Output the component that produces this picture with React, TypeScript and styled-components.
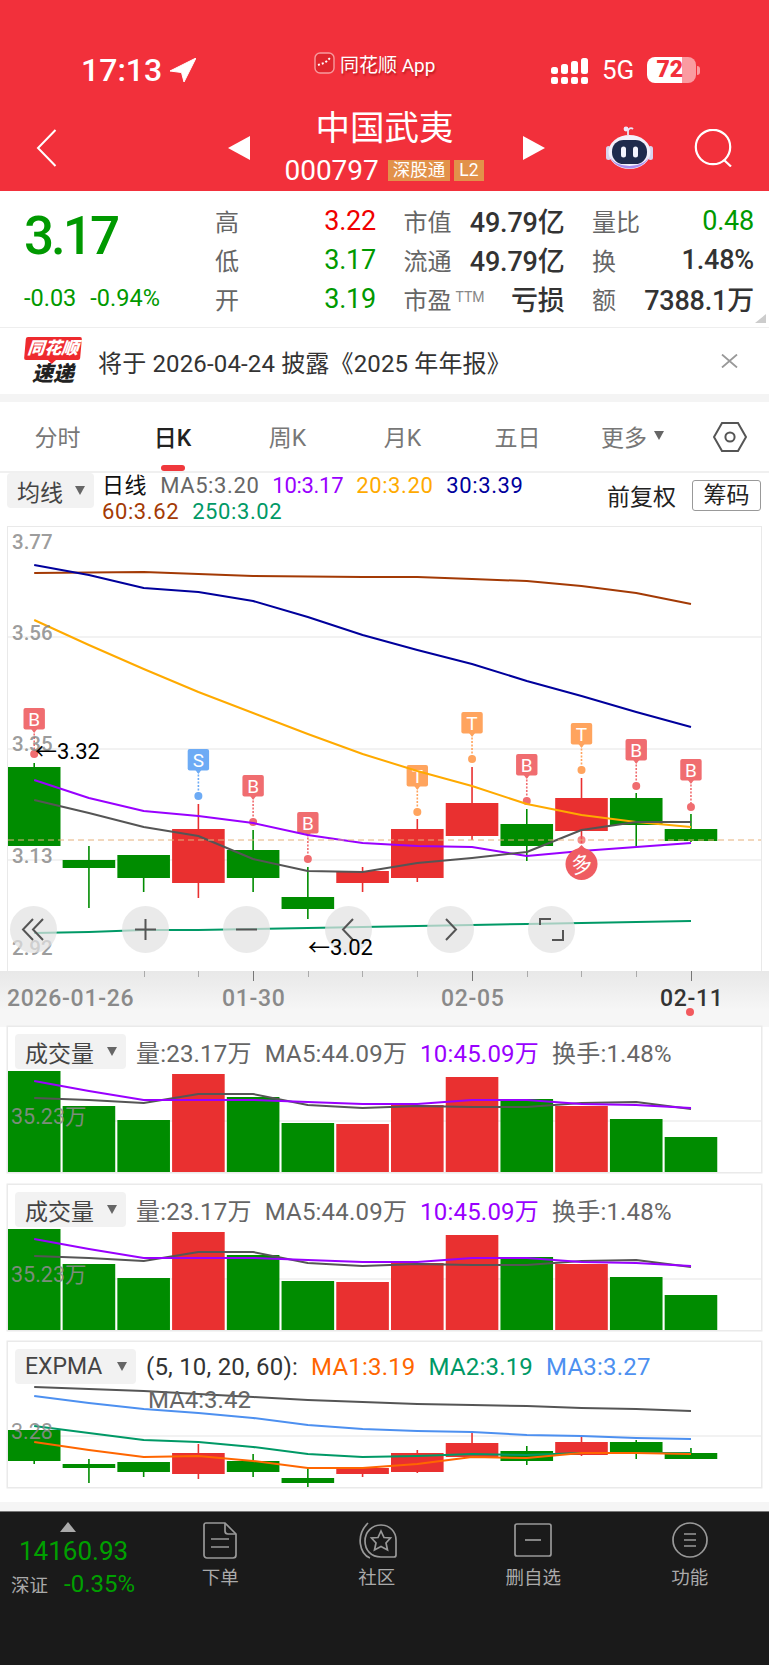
import React from "react";
import styled, { createGlobalStyle } from "styled-components";

const FONT = `Roboto, "Noto Sans CJK SC", sans-serif`;
const RED = "#e93030";
const GREEN = "#008c00";
const HEAD = "#f2303b";

const GlobalStyle = createGlobalStyle`
    html, body { margin: 0; padding: 0; background: #fff; }
    * { box-sizing: border-box; }
    body { font-family: ${FONT}; color: #333; }
`;

// candle x centres, shared by every chart
const XS = Array.from({ length: 13 }, (_, i) => 34.2 + 54.73 * i);
const BODY_W = 52.6;

type Candle = { up: boolean; top: number; bottom: number; high: number; low: number };
const c = (up: boolean, top: number, bottom: number, high: number, low: number): Candle => ({ up, top, bottom, high, low });

const MAIN_CANDLES: Candle[] = [
    c(false, 767, 846, 763, 846),
    c(false, 860, 868, 846, 908),
    c(false, 855, 878, 855, 892),
    c(true, 829, 883, 804, 898),
    c(false, 850, 878, 830, 892),
    c(false, 897, 909, 867, 919),
    c(true, 871, 883, 867, 892),
    c(true, 829, 878, 819, 882),
    c(true, 803, 836, 767, 840),
    c(false, 824, 846, 809, 861),
    c(true, 798, 831, 778, 843),
    c(false, 798, 825, 793, 846),
    c(false, 829, 841, 814, 842),
];

const EXPMA_CANDLES: Candle[] = [
    c(false, 1430, 1461, 1430, 1464),
    c(false, 1464, 1468, 1459, 1483),
    c(false, 1462, 1472, 1462, 1477),
    c(true, 1453, 1474, 1444, 1479),
    c(false, 1461, 1472, 1454, 1477),
    c(false, 1478, 1483, 1468, 1487),
    c(true, 1468, 1474, 1467, 1477),
    c(true, 1453, 1472, 1450, 1473),
    c(true, 1443, 1457, 1431, 1458),
    c(false, 1451, 1461, 1446, 1465),
    c(true, 1442, 1455, 1435, 1456),
    c(false, 1442, 1453, 1440, 1459),
    c(false, 1453, 1459, 1448, 1459),
];

const MA60 = [573, 572.5, 572, 574, 576, 576.5, 577, 577, 579, 581, 586, 593, 604];
const MA30 = [565, 575, 588, 592, 601, 617, 635, 650, 664, 681, 696, 712, 727];
const MA20 = [620, 645, 669, 692, 713, 734, 754, 771, 786, 804, 815, 822, 827];
const MA10 = [780, 798, 811, 816, 823, 835, 843, 846, 847, 856, 851, 847, 843];
const MA5 = [800, 813, 827, 836, 859, 871, 872, 863, 858, 852, 830, 822, 822];
const MA250 = [933, 932, 930, 930, 929, 928, 927, 926, 925, 924, 923, 922, 921];

const VOL_TOPS = [1071, 1106, 1120, 1074, 1097, 1123, 1124, 1105, 1077, 1099, 1106, 1119, 1137];
const VOL_UP = [false, false, false, true, false, false, true, true, true, false, true, false, false];
const VOL_PURPLE = [1081, 1091, 1100, 1100, 1100, 1102, 1104, 1104, 1100, 1100, 1104, 1105, 1108];
const VOL_GRAY = [1098, 1100, 1103, 1094, 1094, 1105, 1108, 1106, 1107, 1107, 1103, 1102, 1109];

const EX_GRAY = [1387, 1389, 1391, 1394, 1397, 1400, 1402, 1404, 1405, 1406, 1408, 1409, 1411];
const EX_BLUE = [1396, 1403, 1409, 1413, 1418, 1425, 1429, 1431, 1432, 1435, 1436, 1438, 1439];
const EX_GREEN = [1426, 1433, 1440, 1442, 1447, 1454, 1457, 1456, 1454, 1455, 1453, 1453, 1453];
const EX_ORANGE = [1442, 1450, 1457, 1456, 1461, 1468, 1468, 1464, 1457, 1458, 1453, 1453, 1454];

const SIGNALS = [
    { i: 0, kind: "B", top: 708, dot: 754 },
    { i: 3, kind: "S", top: 749, dot: 796 },
    { i: 4, kind: "B", top: 775, dot: 822 },
    { i: 5, kind: "B", top: 812, dot: 859 },
    { i: 7, kind: "T", top: 765, dot: 812 },
    { i: 8, kind: "T", top: 712, dot: 759 },
    { i: 9, kind: "B", top: 754, dot: 801 },
    { i: 10, kind: "T", top: 723, dot: 770 },
    { i: 11, kind: "B", top: 739, dot: 786 },
    { i: 12, kind: "B", top: 759, dot: 807 },
];
const SIGNAL_COLOR: Record<string, string> = { B: "#f06d70", S: "#6dabf5", T: "#ffa45e" };

const path = (ys: number[]) => ys.map((y, i) => `${XS[i].toFixed(1)},${y}`).join(" ");

const Page = styled.div`
    width: 769px;
    height: 1665px;
    display: flex;
    flex-direction: column;
    overflow: hidden;
    background: #fff;
    font-family: ${FONT};
`;

/* ---------- red header ---------- */
const Header = styled.header`
    height: 191px;
    background: ${HEAD};
    color: #fff;
`;
const StatusBar = styled.div`
    height: 100px;
    padding-top: 40px;
    display: grid;
    grid-template-columns: 314px 237px 218px;
    align-items: center;
`;
const TimeBlock = styled.div`
    display: flex;
    align-items: center;
    gap: 8px;
    padding-left: 81px;
    height: 34px;
`;
const Time = styled.span`
    font-size: 32px;
    font-weight: 500;
    line-height: 34px;
`;
const Banner = styled.div`
    display: flex;
    align-items: center;
    gap: 5px;
    margin-bottom: 14px;
    font-size: 19px;
    text-shadow: 1px 2px 2px rgba(120, 0, 0, 0.45);
`;
const StatusRight = styled.div`
    display: flex;
    align-items: center;
`;
const SignalGrid = styled.div`
    display: flex;
    gap: 3px;
`;
const SignalCol = styled.div`
    display: flex;
    flex-direction: column;
    justify-content: flex-end;
    gap: 3px;
    height: 27px;
`;
const SignalTop = styled.span<{ $h: number }>`
    width: 7px;
    height: ${({ $h }) => $h}px;
    border-radius: 2.5px;
    background: #fff;
`;
const SignalDot = styled.span`
    width: 7px;
    height: 7px;
    border-radius: 2px;
    background: #fff;
`;
const NetLabel = styled.span`
    margin-left: 14px;
    font-size: 26px;
    line-height: 27px;
`;
const Battery = styled.div`
    position: relative;
    margin-left: 13px;
    width: 49px;
    height: 26px;
    border-radius: 8px;
    overflow: hidden;
    background: linear-gradient(to right, #fff 0 35px, #fa9ba1 35px 49px);
    color: ${HEAD};
    font-size: 23px;
    font-weight: 900;
    line-height: 26px;
    text-align: center;
    padding-right: 4px;
`;
const BatteryNub = styled.span`
    width: 3px;
    height: 9px;
    margin-left: 1px;
    border-radius: 0 3px 3px 0;
    background: #fa9ba1;
`;
const NavBar = styled.div`
    height: 91px;
    padding-top: 4px;
    display: grid;
    grid-template-columns: 228px 22px 273px 22px 1fr;
    align-items: center;
`;
const BackCell = styled.div`
    padding-left: 36px;
    display: flex;
`;
const TitleBlock = styled.div`
    display: flex;
    flex-direction: column;
    align-items: center;
`;
const Title = styled.div`
    font-size: 34.5px;
    line-height: 46px;
    margin-right: 4px;
`;
const SubLine = styled.div`
    display: flex;
    align-items: center;
    height: 40px;
    margin-right: 1px;
`;
const Code = styled.span`
    font-size: 28px;
    margin-right: 9px;
`;
const Badge = styled.span`
    height: 21px;
    padding: 0 5px;
    margin-right: 4px;
    background: #e2914a;
    color: #fff;
    font-size: 17.5px;
    line-height: 21px;
`;
const NavActions = styled.div`
    display: flex;
    align-items: center;
    gap: 41px;
    margin-left: 61px;
`;

/* ---------- quote ---------- */
const Quote = styled.section`
    position: relative;
    height: 137px;
    padding-top: 10px;
    display: grid;
    grid-template-columns: 215px 1fr;
    border-bottom: 1px solid #eee;
`;
const PriceCol = styled.div`
    padding-left: 24px;
    display: flex;
    flex-direction: column;
    color: #009900;
`;
const BigPrice = styled.div`
    height: 78px;
    padding-top: 5px;
    font-size: 53px;
    line-height: 60px;
    font-weight: 500;
    letter-spacing: -3px;
`;
const ChangeRow = styled.div`
    display: flex;
    gap: 14px;
    font-size: 23.5px;
    line-height: 39px;
`;
const StatGrid = styled.div`
    display: grid;
    grid-template-columns: 161px 161px 162px;
    grid-auto-rows: 39px;
    column-gap: 27.5px;
`;
const Stat = styled.div`
    display: flex;
    align-items: center;
    justify-content: space-between;
`;
const StatLabel = styled.span`
    font-size: 24px;
    color: #666;
`;
const Tiny = styled.sup`
    font-size: 14px;
    margin-left: 4px;
    color: #888;
    vertical-align: 7px;
    line-height: 0;
`;
const StatValue = styled.span<{ $color: string }>`
    font-size: 27px;
    letter-spacing: -0.2px;
    font-weight: ${({ $color }) => ($color === "#333" ? 500 : 400)};
    color: ${({ $color }) => $color};
`;
const CornerMark = styled.span`
    position: absolute;
    right: 3px;
    bottom: 4px;
    width: 0;
    height: 0;
    border-left: 11px solid transparent;
    border-bottom: 9px solid #ccc;
`;

/* ---------- notice ---------- */
const Notice = styled.section`
    height: 66px;
    display: flex;
    align-items: center;
    padding: 0 31px 0 25px;
`;
const LogoMark = styled.div`
    width: 56px;
    display: flex;
    flex-direction: column;
    align-items: center;
`;
const LogoTag = styled.div`
    position: relative;
    width: 56px;
    height: 23px;
    border-radius: 2px;
    background: #ee2a2e;
    transform: skewX(-5deg);
    color: #fff;
    font-size: 17px;
    font-weight: 900;
    font-style: italic;
    line-height: 23px;
    text-align: center;
    white-space: nowrap;
    &::after {
        content: "";
        position: absolute;
        left: 23px;
        bottom: -4px;
        border-left: 5px solid transparent;
        border-right: 5px solid transparent;
        border-top: 5px solid #ee2a2e;
    }
`;
const LogoWord = styled.div`
    margin-top: 3px;
    color: #222;
    font-size: 21px;
    font-weight: 900;
    font-style: italic;
    line-height: 22px;
`;
const NoticeText = styled.div`
    margin-left: 17px;
    flex: 1;
    font-size: 24px;
    letter-spacing: 0.15px;
    color: #333;
    white-space: nowrap;
`;
const Gap = styled.div`
    height: 8px;
    background: #f4f4f4;
    flex: none;
`;

/* ---------- tabs ---------- */
const Tabs = styled.nav`
    height: 71px;
    display: grid;
    grid-template-columns: repeat(6, 115px) 79px;
    align-items: center;
    border-bottom: 2px solid #f0f0f0;
`;
const Tab = styled.div<{ $active?: boolean }>`
    position: relative;
    height: 69px;
    display: flex;
    align-items: center;
    justify-content: center;
    gap: 4px;
    padding-bottom: 2px;
    font-size: 23px;
    color: ${({ $active }) => ($active ? "#222" : "#777")};
    font-weight: ${({ $active }) => ($active ? 500 : 400)};
    &::after {
        content: "";
        display: ${({ $active }) => ($active ? "block" : "none")};
        position: absolute;
        left: 46px;
        bottom: 0;
        width: 24px;
        height: 6px;
        border-radius: 3px;
        background: #f0383c;
    }
`;
const Caret = styled.span`
    display: inline-block;
    flex: none;
    width: 0;
    height: 0;
    border-left: 5.5px solid transparent;
    border-right: 5.5px solid transparent;
    border-top: 9px solid #666;
    margin-left: 3px;
`;
const TabIcon = styled.div`
    display: flex;
    justify-content: center;
`;

/* ---------- indicator toolbar ---------- */
const Toolbar = styled.div`
    height: 54px;
    padding-left: 7px;
    padding-right: 8px;
    display: flex;
    align-items: flex-start;
`;
const Dropdown = styled.div<{ $w: number }>`
    width: ${({ $w }) => $w}px;
    height: 35px;
    flex: none;
    padding: 0 9px 0 10px;
    display: flex;
    align-items: center;
    justify-content: space-between;
    background: #f2f2f2;
    border-radius: 4px;
    color: #444;
    font-size: 23px;
    white-space: nowrap;
`;
const Legend = styled.div`
    flex: 1;
    margin-left: 8px;
    font-size: 22px;
    line-height: 26px;
    letter-spacing: 0.6px;
`;
const LegendRow = styled.div`
    display: flex;
    gap: 13px;
    white-space: nowrap;
`;
const LegendItem = styled.span<{ $color: string; $tight?: boolean }>`
    color: ${({ $color }) => $color};
    letter-spacing: ${({ $tight }) => ($tight ? "-0.3px" : "inherit")};
`;
const RightTools = styled.div`
    display: flex;
    align-items: center;
    gap: 16px;
    margin-top: 5px;
    font-size: 23px;
    color: #222;
`;
const OutlineBtn = styled.span`
    width: 69px;
    height: 31px;
    border: 1px solid #999;
    border-radius: 3px;
    text-align: center;
    line-height: 29px;
`;

/* ---------- main chart ---------- */
const ChartBox = styled.div`
    position: relative;
    flex: none;
    width: 753px;
    height: 444px;
    margin-left: 8px;
    box-shadow: 0 0 0 1px #e9e9e9;
    & > svg {
        display: block;
    }
`;
const PriceLabel = styled.span<{ $y: number }>`
    position: absolute;
    left: 4px;
    top: ${({ $y }) => $y}px;
    font-size: 20.5px;
    line-height: 20px;
    font-weight: 500;
    color: rgba(130, 130, 130, 0.8);
    transform: translateY(-50%);
`;
const Extreme = styled.span<{ $x: number; $y: number }>`
    position: absolute;
    left: ${({ $x }) => $x}px;
    top: ${({ $y }) => $y}px;
    z-index: 3;
    font-size: 22px;
    line-height: 24px;
    color: #000;
    transform: translateY(-50%);
    white-space: nowrap;
`;
const Controls = styled.div`
    position: absolute;
    left: 2px;
    top: 379px;
    display: flex;
    gap: 54.7px;
`;
const RoundBtn = styled.div<{ $first?: boolean }>`
    width: 47px;
    height: 47px;
    border-radius: 50%;
    margin-right: ${({ $first }) => ($first ? "10px" : "0")};
    background: rgba(226, 226, 226, 0.72);
    display: flex;
    align-items: center;
    justify-content: center;
`;
const AxisRow = styled.div`
    position: relative;
    flex: none;
    height: 56px;
    background: linear-gradient(#e8e8e8, #f6f6f6 70%);
    display: flex;
    align-items: flex-start;
`;
const Tick = styled.span<{ $x: number; $long?: boolean }>`
    position: absolute;
    top: 0;
    left: ${({ $x }) => $x}px;
    width: 1px;
    height: ${({ $long }) => ($long ? 10 : 6)}px;
    background: ${({ $long }) => ($long ? "#777" : "#aaa")};
`;
const AxisDate = styled.span<{ $x: number; $dark?: boolean }>`
    position: absolute;
    left: ${({ $x }) => $x}px;
    top: 14px;
    font-size: 23px;
    line-height: 28px;
    letter-spacing: 0.7px;
    font-weight: 500;
    color: ${({ $dark }) => ($dark ? "#333" : "#8a8a8a")};
`;
const TodayDot = styled.span`
    position: absolute;
    left: 686px;
    top: 37px;
    width: 8px;
    height: 8px;
    border-radius: 50%;
    background: #f25a5e;
`;

/* ---------- sub panels ---------- */
const SubPanel = styled.section<{ $mb: number }>`
    position: relative;
    flex: none;
    width: 753px;
    height: 145px;
    margin: 0 0 ${({ $mb }) => $mb}px 8px;
    box-shadow: 0 0 0 1.5px #eaeaea;
    & > svg {
        display: block;
    }
`;
const PanelHead = styled.div`
    height: 43px;
    padding: 7px 0 0 7px;
    display: flex;
    align-items: flex-start;
`;
const PanelLegend = styled.div`
    margin-left: 10px;
    height: 35px;
    display: flex;
    align-items: center;
    gap: 13px;
    font-size: 24px;
    letter-spacing: 0.2px;
    white-space: nowrap;
`;
const PanelLabel = styled.span<{ $y: number }>`
    position: absolute;
    left: 3px;
    top: ${({ $y }) => $y}px;
    font-size: 21.5px;
    line-height: 20px;
    color: rgba(140, 140, 140, 0.9);
    transform: translateY(-50%);
`;
const FloatLegend = styled.span`
    position: absolute;
    left: 140px;
    top: 46px;
    font-size: 24px;
    line-height: 24px;
    color: #666;
`;
const BottomStrip = styled.div`
    flex: none;
    height: 9px;
    margin-top: 15px;
    background: #f5f5f5;
`;

/* ---------- bottom bar ---------- */
const BottomBar = styled.footer`
    flex: 1;
    display: grid;
    grid-template-columns: 142px repeat(4, 156.5px);
    background: #1a1a1a;
    border-top: 1px solid #777;
    color: #aaa;
`;
const IndexCell = styled.div`
    position: relative;
    padding: 23px 0 0 11px;
`;
const UpMark = styled.span`
    position: absolute;
    left: 60px;
    top: 10px;
    border-left: 8.5px solid transparent;
    border-right: 8.5px solid transparent;
    border-bottom: 10px solid #aaa;
`;
const IndexValue = styled.div`
    margin-left: 8px;
    font-size: 26px;
    line-height: 32px;
    color: #00a000;
    white-space: nowrap;
`;
const IndexRow = styled.div`
    margin-top: 3px;
    display: flex;
    align-items: center;
    gap: 16px;
    white-space: nowrap;
`;
const IndexName = styled.span`
    font-size: 18.5px;
`;
const IndexPct = styled.span`
    font-size: 24px;
    color: #00a000;
`;
const BarItem = styled.div`
    display: flex;
    flex-direction: column;
    align-items: center;
    padding-top: 10px;
`;
const BarIcon = styled.div`
    height: 36px;
    display: flex;
    align-items: center;
`;
const BarText = styled.span`
    margin-top: 9px;
    font-size: 18.5px;
    line-height: 22px;
`;

/* ---------- drawings ---------- */
const Candles: React.FC<{ data: Candle[] }> = ({ data }) => (
    <>
        {data.map((d, i) => {
            const col = d.up ? RED : GREEN;
            return (
                <g key={i}>
                    <line x1={XS[i]} x2={XS[i]} y1={d.high} y2={d.low} stroke={col} strokeWidth={1.6} />
                    <rect x={XS[i] - BODY_W / 2} y={d.top} width={BODY_W} height={d.bottom - d.top} fill={col} />
                </g>
            );
        })}
    </>
);

const Line: React.FC<{ ys: number[]; color: string; w?: number }> = ({ ys, color, w = 2 }) => (
    <polyline points={path(ys)} fill="none" stroke={color} strokeWidth={w} strokeLinejoin="round" />
);

const Signal: React.FC<{ x: number; kind: string; top: number; dot: number }> = ({ x, kind, top, dot }) => {
    const col = SIGNAL_COLOR[kind];
    return (
        <g>
            <line x1={x} x2={x} y1={top + 22} y2={dot} stroke={col} strokeWidth={1.6} strokeDasharray="2 1.5" />
            <rect x={x - 10.7} y={top} width={21.4} height={21.4} rx={2} fill={col} />
            <path d={`M${x - 3} ${top + 21} L${x} ${top + 25} L${x + 3} ${top + 21} Z`} fill={col} />
            <circle cx={x} cy={dot} r={4} fill={col} />
            <text x={x} y={top + 17.6} textAnchor="middle" fontSize={19} fill="#fff" fontFamily="Roboto, sans-serif">
                {kind}
            </text>
        </g>
    );
};

const AppLogo = () => (
    <svg width="21" height="22" viewBox="0 0 21 22">
        <rect x="1" y="1" width="19" height="20" rx="5" fill="#e0262e" stroke="#f79a9e" strokeWidth="1.4" />
        <path d="M4 13l3-1 3-1 3-2 3-3" stroke="#fff" strokeWidth="2" strokeDasharray="2 2" fill="none" />
    </svg>
);

const LocationArrow = () => (
    <svg width="26" height="24" viewBox="0 0 26 24">
        <path d="M26 0 L0 13 L11.5 14.5 L14 24 Z" fill="#fff" stroke="#fff" strokeLinejoin="round" />
    </svg>
);

const BackIcon = () => (
    <svg width="21" height="38" viewBox="0 0 21 38">
        <polyline points="19.5,1 2,19 19.5,37" fill="none" stroke="#fff" strokeWidth="2" />
    </svg>
);

const Triangle: React.FC<{ dir: "left" | "right" }> = ({ dir }) => (
    <svg width="22" height="24" viewBox="0 0 22 24">
        <path d={dir === "left" ? "M22 0V24L0 12Z" : "M0 0V24L22 12Z"} fill="#fff" />
    </svg>
);

const RobotIcon = () => (
    <svg width="47" height="43" viewBox="0 0 47 43">
        <path d="M22 9 V5 a3 3 0 0 1 5 -2" fill="none" stroke="#e9e5f6" strokeWidth="1.8" />
        <circle cx="20" cy="3" r="2.4" fill="#eee9fb" />
        <rect x="0" y="20" width="5" height="14" rx="2.5" fill="#d7d3ee" />
        <rect x="42" y="20" width="5" height="14" rx="2.5" fill="#d7d3ee" />
        <ellipse cx="23.5" cy="26" rx="21" ry="17" fill="#f3f1fb" />
        <path d="M4 30 a20 13 0 0 0 39 0 a20 16 0 0 1 -39 0Z" fill="#a88df0" />
        <rect x="6" y="14" width="35" height="24" rx="11.5" fill="#1f2b4d" />
        <rect x="15" y="20.5" width="5" height="11" rx="2.5" fill="#f4f4ff" />
        <rect x="27" y="20.5" width="5" height="11" rx="2.5" fill="#f4f4ff" />
    </svg>
);

const SearchIcon = () => (
    <svg width="40" height="38" viewBox="0 0 40 38">
        <circle cx="19" cy="18" r="17.2" fill="none" stroke="#fff" strokeWidth="2.2" />
        <line x1="30" y1="31" x2="37" y2="37.5" stroke="#fff" strokeWidth="2.2" />
    </svg>
);

const CloseIcon = () => (
    <svg width="17" height="14" viewBox="0 0 17 14">
        <path d="M1 0.5 L16 13.5 M16 0.5 L1 13.5" stroke="#999" strokeWidth="1.8" />
    </svg>
);

const HexIcon = () => (
    <svg width="34" height="30" viewBox="0 0 34 30">
        <path d="M9 1 H25 L33 15 L25 29 H9 L1 15 Z" fill="none" stroke="#555" strokeWidth="2" />
        <circle cx="17" cy="15" r="4.6" fill="none" stroke="#555" strokeWidth="2" />
    </svg>
);

const ctrlStroke = { fill: "none", stroke: "#555", strokeWidth: 2 };
const ControlIcon: React.FC<{ d: string }> = ({ d }) => (
    <svg width="27" height="27" viewBox="0 0 27 27">
        <path d={d} {...ctrlStroke} />
    </svg>
);

const BarFile = () => (
    <svg width="34" height="37" viewBox="0 0 34 37" fill="none" stroke="#999" strokeWidth="1.7">
        <path d="M3 1 H22 L33 12 V33 a3 3 0 0 1 -3 3 H4 a3 3 0 0 1 -3 -3 V3 a2 2 0 0 1 2 -2Z" />
        <path d="M22 1 V9 a3 3 0 0 0 3 3 H33" />
        <path d="M8 17 H26 M8 25 H26" />
    </svg>
);
const BarCommunity = () => (
    <svg width="40" height="37" viewBox="0 0 40 37" fill="none" stroke="#999" strokeWidth="1.7">
        <path d="M13 36 C3 32 -2 14 11 1" />
        <path d="M24 3 C33 3 39 10 39 18 V33 a2 2 0 0 1 -2 2 H24 C14 35 8 28 8 19 C8 10 15 3 24 3Z" />
        <path d="M24 9 L27 15.5 L33.5 16 L29 21 L30.5 28 L24 24.5 L17.5 28 L19 21 L14.5 16 L21 15.5 Z" />
    </svg>
);
const BarMinus = () => (
    <svg width="38" height="34" viewBox="0 0 38 34" fill="none" stroke="#999" strokeWidth="1.7">
        <rect x="1" y="1" width="36" height="32" rx="2" />
        <path d="M11 17 H27" />
    </svg>
);
const BarMenu = () => (
    <svg width="36" height="36" viewBox="0 0 36 36" fill="none" stroke="#999" strokeWidth="1.7">
        <circle cx="18" cy="18" r="17" />
        <path d="M12 12 H24 M12 18 H24 M12 24 H24" />
    </svg>
);

/* ---------- charts ---------- */
const MainChart = () => (
    <svg width="753" height="444" viewBox="8 527 753 444">
        {[637, 749, 860].map((y) => (
            <line key={y} x1="8" x2="761" y1={y} y2={y} stroke="#eee" strokeWidth="1.4" />
        ))}
        <Candles data={MAIN_CANDLES} />
        {SIGNALS.map((s) => (
            <Signal key={s.i} x={XS[s.i]} kind={s.kind} top={s.top} dot={s.dot} />
        ))}
        <circle cx={XS[10]} cy="840" r="4" fill="#f25a5e" opacity="0.75" />
        <path d={`M${XS[10] - 5} 850 L${XS[10]} 845 L${XS[10] + 5} 850Z`} fill="#f06064" />
        <Line ys={MA60} color="#a33a05" />
        <Line ys={MA30} color="#00009c" />
        <Line ys={MA20} color="#ffaa00" />
        <Line ys={MA250} color="#009966" />
        <Line ys={MA10} color="#9900ff" />
        <Line ys={MA5} color="#555555" />
        <line x1="8" x2="761" y1="840" y2="840" stroke="#e6b07a" strokeWidth="1" strokeDasharray="6 4" />
        <circle cx={XS[10]} cy="864" r="16" fill="#ef5d62" />
        <text x={XS[10]} y="872" textAnchor="middle" fontSize="21" fill="#fff" fontFamily="'Noto Sans CJK SC'" transform={`rotate(-12 ${XS[10]} 864)`}>
            多
        </text>
    </svg>
);

const VolumeChart = () => (
    <svg width="753" height="102" viewBox="8 1070 753 102">
        <line x1="8" x2="761" y1="1121" y2="1121" stroke="#eee" strokeWidth="1.4" />
        {VOL_TOPS.map((t, i) => (
            <rect key={i} x={XS[i] - BODY_W / 2} y={t} width={BODY_W} height={1172 - t} fill={VOL_UP[i] ? RED : GREEN} />
        ))}
        <Line ys={VOL_GRAY} color="#555555" />
        <Line ys={VOL_PURPLE} color="#9900ff" />
    </svg>
);

const ExpmaChart = () => (
    <svg width="753" height="102" viewBox="8 1385 753 102">
        <line x1="8" x2="761" y1="1436" y2="1436" stroke="#eee" strokeWidth="1.4" />
        <Candles data={EXPMA_CANDLES} />
        <Line ys={EX_GRAY} color="#555555" />
        <Line ys={EX_BLUE} color="#4d90f0" />
        <Line ys={EX_GREEN} color="#009966" />
        <Line ys={EX_ORANGE} color="#ff6600" />
    </svg>
);

const VolumePanel: React.FC<{ mb: number }> = ({ mb }) => (
    <SubPanel $mb={mb}>
        <PanelHead>
            <Dropdown $w={111}>
                成交量
                <Caret />
            </Dropdown>
            <PanelLegend>
                <LegendItem $color="#666">量:23.17万</LegendItem>
                <LegendItem $color="#666">MA5:44.09万</LegendItem>
                <LegendItem $color="#9900ff">10:45.09万</LegendItem>
                <LegendItem $color="#666">换手:1.48%</LegendItem>
            </PanelLegend>
        </PanelHead>
        <VolumeChart />
        <PanelLabel $y={90}>35.23万</PanelLabel>
    </SubPanel>
);

const STATS = [
    ["高", "3.22", "#f00000"],
    ["市值", "49.79亿", "#333"],
    ["量比", "0.48", "#009900"],
    ["低", "3.17", "#009900"],
    ["流通", "49.79亿", "#333"],
    ["换", "1.48%", "#333"],
    ["开", "3.19", "#009900"],
    ["市盈", "亏损", "#333"],
    ["额", "7388.1万", "#333"],
];

const App: React.FC = () => (
    <Page>
        <GlobalStyle />
        <Header>
            <StatusBar>
                <TimeBlock>
                    <Time>17:13</Time>
                    <LocationArrow />
                </TimeBlock>
                <Banner>
                    <AppLogo />
                    同花顺 App
                </Banner>
                <StatusRight>
                    <SignalGrid>
                        {[7, 10, 13, 16].map((h) => (
                            <SignalCol key={h}>
                                <SignalTop $h={h} />
                                <SignalDot />
                            </SignalCol>
                        ))}
                    </SignalGrid>
                    <NetLabel>5G</NetLabel>
                    <Battery>72</Battery>
                    <BatteryNub />
                </StatusRight>
            </StatusBar>
            <NavBar>
                <BackCell>
                    <BackIcon />
                </BackCell>
                <Triangle dir="left" />
                <TitleBlock>
                    <Title>中国武夷</Title>
                    <SubLine>
                        <Code>000797</Code>
                        <Badge>深股通</Badge>
                        <Badge>L2</Badge>
                    </SubLine>
                </TitleBlock>
                <Triangle dir="right" />
                <NavActions>
                    <RobotIcon />
                    <SearchIcon />
                </NavActions>
            </NavBar>
        </Header>

        <Quote>
            <PriceCol>
                <BigPrice>3.17</BigPrice>
                <ChangeRow>
                    <span>-0.03</span>
                    <span>-0.94%</span>
                </ChangeRow>
            </PriceCol>
            <StatGrid>
                {STATS.map(([label, value, color]) => (
                    <Stat key={label}>
                        <StatLabel>
                            {label}
                            {label === "市盈" && <Tiny>TTM</Tiny>}
                        </StatLabel>
                        <StatValue $color={color}>{value}</StatValue>
                    </Stat>
                ))}
            </StatGrid>
            <CornerMark />
        </Quote>

        <Notice>
            <LogoMark>
                <LogoTag>同花顺</LogoTag>
                <LogoWord>速递</LogoWord>
            </LogoMark>
            <NoticeText>将于 2026-04-24 披露《2025 年年报》</NoticeText>
            <CloseIcon />
        </Notice>
        <Gap />

        <Tabs>
            <Tab>分时</Tab>
            <Tab $active>日K</Tab>
            <Tab>周K</Tab>
            <Tab>月K</Tab>
            <Tab>五日</Tab>
            <Tab>
                更多
                <Caret />
            </Tab>
            <TabIcon>
                <HexIcon />
            </TabIcon>
        </Tabs>

        <Toolbar>
            <Dropdown $w={87}>
                均线
                <Caret />
            </Dropdown>
            <Legend>
                <LegendRow>
                    <LegendItem $color="#111">日线</LegendItem>
                    <LegendItem $color="#666">MA5:3.20</LegendItem>
                    <LegendItem $color="#9900ff" $tight>10:3.17</LegendItem>
                    <LegendItem $color="#ffaa00">20:3.20</LegendItem>
                    <LegendItem $color="#00009c">30:3.39</LegendItem>
                </LegendRow>
                <LegendRow>
                    <LegendItem $color="#a33a05">60:3.62</LegendItem>
                    <LegendItem $color="#009966">250:3.02</LegendItem>
                </LegendRow>
            </Legend>
            <RightTools>
                前复权
                <OutlineBtn>筹码</OutlineBtn>
            </RightTools>
        </Toolbar>

        <ChartBox>
            <MainChart />
            <PriceLabel $y={15}>3.77</PriceLabel>
            <PriceLabel $y={106}>3.56</PriceLabel>
            <PriceLabel $y={217}>3.35</PriceLabel>
            <PriceLabel $y={329}>3.13</PriceLabel>
            <PriceLabel $y={421}>2.92</PriceLabel>
            <Controls>
                <RoundBtn $first>
                    <ControlIcon d="M13 3 L3 13.5 L13 24 M23 3 L13 13.5 L23 24" />
                </RoundBtn>
                <RoundBtn>
                    <ControlIcon d="M13.5 3 V24 M3 13.5 H24" />
                </RoundBtn>
                <RoundBtn>
                    <ControlIcon d="M3 13.5 H24" />
                </RoundBtn>
                <RoundBtn>
                    <ControlIcon d="M18 3 L8 13.5 L18 24" />
                </RoundBtn>
                <RoundBtn>
                    <ControlIcon d="M9 3 L19 13.5 L9 24" />
                </RoundBtn>
                <RoundBtn>
                    <ControlIcon d="M2 9 V3 H13 M25 14 V24 H14" />
                </RoundBtn>
            </Controls>
            <Extreme $x={27} $y={225}>←3.32</Extreme>
            <Extreme $x={300} $y={421}>←3.02</Extreme>
        </ChartBox>

        <AxisRow>
            {[144, 198, 253, 308, 362, 417, 472, 527, 581, 636, 691].map((x) => (
                <Tick key={x} $x={x} $long={x === 253 || x === 472 || x === 691} />
            ))}
            <AxisDate $x={7}>2026-01-26</AxisDate>
            <AxisDate $x={222}>01-30</AxisDate>
            <AxisDate $x={441}>02-05</AxisDate>
            <AxisDate $x={660} $dark>02-11</AxisDate>
            <TodayDot />
        </AxisRow>

        <VolumePanel mb={13} />
        <VolumePanel mb={12} />

        <SubPanel $mb={0}>
            <PanelHead>
                <Dropdown $w={121}>
                    EXPMA
                    <Caret />
                </Dropdown>
                <PanelLegend>
                    <LegendItem $color="#333">(5, 10, 20, 60):</LegendItem>
                    <LegendItem $color="#ff6600">MA1:3.19</LegendItem>
                    <LegendItem $color="#009966">MA2:3.19</LegendItem>
                    <LegendItem $color="#4d90f0">MA3:3.27</LegendItem>
                </PanelLegend>
            </PanelHead>
            <ExpmaChart />
            <FloatLegend>MA4:3.42</FloatLegend>
            <PanelLabel $y={90}>3.28</PanelLabel>
        </SubPanel>
        <BottomStrip />

        <BottomBar>
            <IndexCell>
                <UpMark />
                <IndexValue>14160.93</IndexValue>
                <IndexRow>
                    <IndexName>深证</IndexName>
                    <IndexPct>-0.35%</IndexPct>
                </IndexRow>
            </IndexCell>
            <BarItem>
                <BarIcon>
                    <BarFile />
                </BarIcon>
                <BarText>下单</BarText>
            </BarItem>
            <BarItem>
                <BarIcon>
                    <BarCommunity />
                </BarIcon>
                <BarText>社区</BarText>
            </BarItem>
            <BarItem>
                <BarIcon>
                    <BarMinus />
                </BarIcon>
                <BarText>删自选</BarText>
            </BarItem>
            <BarItem>
                <BarIcon>
                    <BarMenu />
                </BarIcon>
                <BarText>功能</BarText>
            </BarItem>
        </BottomBar>
    </Page>
);

export default App;
